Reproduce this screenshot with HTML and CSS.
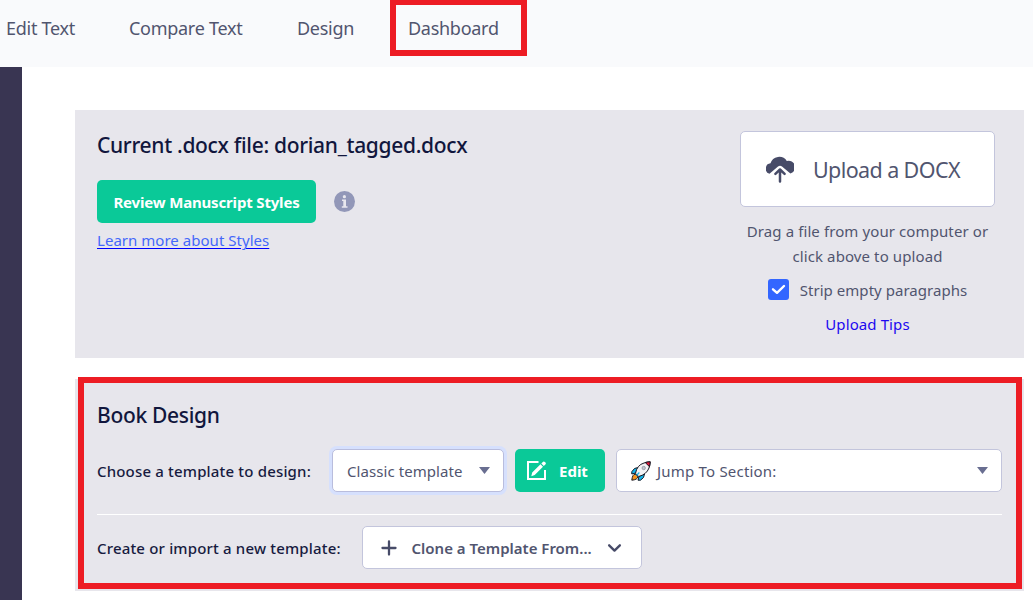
FILE: index.html
```html
<!DOCTYPE html>
<html lang="en">
<head>
<meta charset="utf-8">
<title>Dashboard</title>
<link rel="stylesheet" href="styles.css">
</head>
<body>
<header class="topbar">
  <nav class="nav">
    <a class="nav-item"><span>Edit Text</span></a>
    <a class="nav-item"><span>Compare Text</span></a>
    <a class="nav-item"><span>Design</span></a>
    <a class="nav-item nav-active"><span>Dashboard</span></a>
  </nav>
</header>
<div class="body">
  <aside class="sidebar"></aside>
  <main class="main">
    <section class="panel file-panel">
      <div class="file-info">
        <h2 class="title"><span>Current .docx file: dorian_tagged.docx</span></h2>
        <div class="review-row">
          <button class="btn btn-review"><span>Review Manuscript Styles</span></button>
          <svg class="info" viewBox="0 0 21 21"><circle cx="10.5" cy="10.5" r="10.5" fill="#9297b8"/><g fill="#e9e8ee"><circle cx="10.4" cy="5.7" r="1.6"/><path d="M8 8.600h4v6.600h1.500v1.500H7.800v-1.500h1.500v-5.100H8z"/></g></svg>
        </div>
        <a class="learn"><span>Learn more about Styles</span></a>
      </div>
      <div class="upload">
        <button class="upload-btn">
          <svg class="cloud" viewBox="0 0 28 28"><path fill="#474b68" d="M3.500 18.800A5.400 5.400 0 0 1 4.500 8.300A9 8.800 0 0 1 20.800 6A6.400 6.400 0 0 1 24.400 18.600L16 11.500Q14 10 12 11.500Z"/><path fill="none" stroke="#474b68" stroke-width="2.500" stroke-linecap="round" stroke-linejoin="round" d="M14 26.500V15M9.400 18.800 14 14.500l4.600 4.300"/></svg>
          <span>Upload a DOCX</span>
        </button>
        <p class="hint"><span>Drag a file from your computer or</span><span>click above to upload</span></p>
        <label class="strip">
          <svg class="check" viewBox="0 0 21 21"><rect width="21" height="21" rx="3" fill="#3366ff"/><path d="M5 10.300 9 13.800 16 7" fill="none" stroke="#fff" stroke-width="2.400" stroke-linecap="round" stroke-linejoin="round"/></svg>
          <span>Strip empty paragraphs</span>
        </label>
        <a class="tips"><span>Upload Tips</span></a>
      </div>
    </section>
    <section class="panel design-panel">
      <h2 class="title"><span>Book Design</span></h2>
      <div class="row choose-row">
        <span class="label">Choose a template to design:</span>
        <div class="field template"><span>Classic template</span><i class="caret"></i></div>
        <button class="btn btn-edit">
          <svg class="pencil" viewBox="0 0 20 20"><path d="M11.500 1H1v17h17V9" fill="none" stroke="#fff" stroke-width="2"/><path fill="#fff" d="M4.300 15.200 5.200 11.600 13.500 3.300 16 5.800 7.700 14.100zM14.300 2.500 16.100.700Q17 0 17.900.900L18.500 1.500Q19.300 2.400 18.600 3.200L16.800 5z"/></svg>
          <span>Edit</span>
        </button>
        <div class="field jump">
          <svg class="rocket" viewBox="0 0 20 20"><g stroke="#171923" stroke-width="1" stroke-linejoin="round"><path fill="#13b5eb" d="M7 6.500 3.500 7.500.8 10.700.8 13l4-1zM13.500 13l-1 3.500-3 2.700H7l1-4z"/><path fill="#f7941d" d="M4.200 13.200Q1.500 13 .8 19.200 6.500 18.800 7 15.500z"/><path fill="#f3f3f5" d="M4.500 12.300Q6 4 13 2Q16 .9 19.200.8Q19 4 18 7Q15.500 13.500 7.700 15.500z"/><path fill="#e8173c" d="M14.200 1.500Q17 .8 19.200.8Q19.100 3.200 18.500 5.700z"/></g><circle cx="12.700" cy="7" r="1.700" fill="#c4c8cf" stroke="#7b8090" stroke-width=".6"/><path d="M8.300 11.500 5.500 14.500" stroke="#13b5eb" stroke-width="1.200"/></svg>
          <span>Jump To Section:</span><i class="caret"></i>
        </div>
      </div>
      <div class="row create-row">
        <span class="label">Create or import a new template:</span>
        <button class="field clone">
          <svg class="plus" viewBox="0 0 14 14"><path d="M7 1.300v11.400M1.300 7h11.400" stroke="#474b68" stroke-width="2" stroke-linecap="round"/></svg>
          <span>Clone a Template From...</span>
          <svg class="chevron" viewBox="0 0 14 9"><path d="M2 2 7 6.900 12 2" fill="none" stroke="#474b68" stroke-width="2.200" stroke-linecap="round" stroke-linejoin="round"/></svg>
        </button>
      </div>
    </section>
  </main>
</div>
</body>
</html>
```
FILE: styles.css
```css
*, *::after { box-sizing: border-box; }
body { margin: 0; height: 600px; overflow: hidden; background: #fff; color: #51556f; font-family: "Noto Sans", "Open Sans", sans-serif; font-size: 15px; display: flex; flex-direction: column; }
span { white-space: nowrap; }
button { font: inherit; color: inherit; border: 0; padding: 0; }
.topbar { height: 67px; flex: none; background: #f9fafc; }
.nav { display: grid; grid-template-columns: 123px 168px 99px 137px; height: 57px; margin-top: -1px; font-size: 18px; letter-spacing: -.28px; }
.nav-item { display: flex; align-items: center; padding: 0 0 0 6px; }
.nav-active { border: 6px solid #ed1c24; padding: 0 0 0 12px; }
.body { display: flex; flex: 1; min-height: 0; }
.sidebar { width: 22px; flex: none; background: #393552; }
.main { width: 1002px; padding: 43px 0 0 53px; display: flex; flex-direction: column; gap: 21px; }
.panel { background: #e7e6ec; width: 949px; flex: none; }
.title { margin: 0; font-size: 21px; line-height: 30px; font-weight: 500; letter-spacing: -.32px; color: #11163d; }
.file-panel { height: 248px; display: flex; justify-content: space-between; padding: 20px 29px 0 22px; }
.review-row { display: flex; align-items: center; gap: 18px; margin-top: 20px; }
.btn { background: #0ac998; color: #fff; border-radius: 5px; height: 43px; display: flex; align-items: center; justify-content: center; font-weight: 700; }
.btn-review { width: 219px; letter-spacing: -.17px; }
.info { width: 21px; height: 21px; }
.learn { display: block; margin-top: 6px; line-height: 22px; color: #4468fa; letter-spacing: .03px; text-decoration: underline; text-underline-offset: 2px; text-decoration-color: #00f; text-decoration-thickness: 1px; }
.upload { width: 255px; display: flex; flex-direction: column; align-items: center; padding-top: 1px; letter-spacing: .1px; }
.upload-btn { width: 255px; height: 76px; background: #fff; border: 1px solid #c3c5dc; border-radius: 5px; display: flex; align-items: center; padding-left: 25px; gap: 19px; font-size: 21.5px; letter-spacing: -.6px; }
.cloud { width: 28px; height: 28px; }
.hint { margin: 12px 0 0; display: flex; flex-direction: column; align-items: center; line-height: 25px; }
.strip { display: flex; align-items: center; gap: 11px; height: 22px; margin-top: 9px; letter-spacing: .04px; }
.strip span { padding-top: 1px; }
.check { width: 21px; height: 21px; }
.tips { color: #1d09f0; line-height: 24px; margin-top: 12px; }
.design-panel { height: 212px; padding: 21px 22px 0; position: relative; }
.design-panel::after { content: ""; position: absolute; left: 3px; top: -2px; width: 944px; height: 212px; border: 6px solid #ed1c24; pointer-events: none; }
.row { display: flex; }
.label { line-height: 45px; color: #171b40; font-weight: 500; letter-spacing: .17px; flex: none; }
.choose-row { margin-top: 19px; height: 66px; border-bottom: 1px solid #fff; }
.choose-row .label { width: 235px; }
.create-row { padding-top: 11px; }
.create-row .label { width: 265px; }
.field { height: 43px; background: #fff; border: 1px solid #c3c5dc; border-radius: 5px; display: flex; align-items: center; padding: 0 14px; }
.template { width: 172px; border-color: #b9bddd; box-shadow: 0 0 0 3px #d6e0fd; justify-content: space-between; padding-right: 13px; letter-spacing: .07px; }
.btn-edit { width: 90px; margin: 0 11px; justify-content: flex-start; padding-left: 12px; gap: 12px; }
.pencil { width: 20px; height: 20px; }
.jump { flex: 1; padding-right: 13px; letter-spacing: .2px; }
.rocket { width: 20px; height: 20px; margin-right: 6px; }
.jump .caret { margin-left: auto; }
.caret { width: 11px; height: 7px; background: #696e91; clip-path: polygon(0 0, 100% 0, 50% 100%); flex: none; }
.clone { width: 280px; padding: 0 19px 0 17.500px; font-weight: 600; letter-spacing: 0; }
.plus { width: 16px; height: 16px; margin-right: 15px; }
.chevron { width: 15px; height: 10px; margin-left: auto; }
```
